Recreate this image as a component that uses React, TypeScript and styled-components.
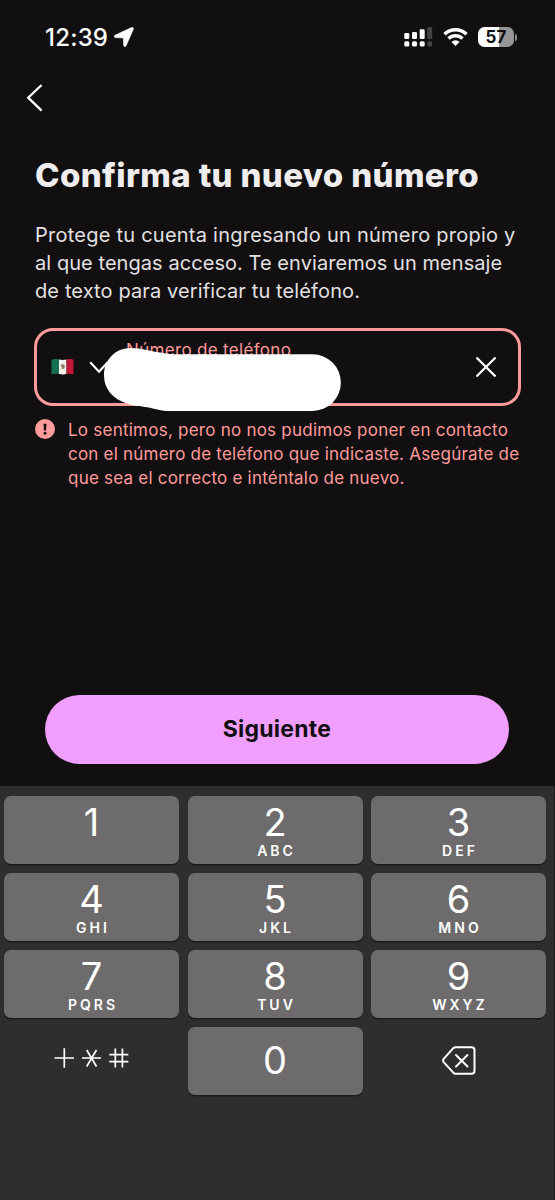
import React from "react";
import styled, { createGlobalStyle } from "styled-components";

interface IKey { digit: string, letters?: string }

const keys: IKey[] = [
  { digit: '1', letters: '' },
  { digit: '2', letters: 'ABC' },
  { digit: '3', letters: 'DEF' },
  { digit: '4', letters: 'GHI' },
  { digit: '5', letters: 'JKL' },
  { digit: '6', letters: 'MNO' },
  { digit: '7', letters: 'PQRS' },
  { digit: '8', letters: 'TUV' },
  { digit: '9', letters: 'WXYZ' },
]

const StatusBar = () => (
  <Status>
    <Clock>
      <Time>12:39</Time>
      <svg width="20" height="20" viewBox="0 0 20 20" fill="#fff">
        <path d="M17.600.5 1 8.200c-1.200.6-1 2.300.4 2.400l7.400.3c.4 0 .6.200.6.600l.3 6.900c.1 1.500 1.800 1.700 2.400.4L19.400 2.100c.4-1-.6-2-1.800-1.600z" stroke="#fff" strokeWidth=".6" strokeLinejoin="round" />
      </svg>
    </Clock>
    <Signals>
      <svg width="29" height="20" viewBox="0 0 29 20" fill="#fff">
        <rect x="0.3" y="6" width="5" height="6" rx="1.3" />
        <rect x="8" y="5" width="5" height="7" rx="1.3" />
        <rect x="15.7" y="2.2" width="5" height="9.8" rx="1.3" />
        <rect x="23.2" y="0" width="5" height="12" rx="1.5" fill="#444344" />
        <rect x="0.3" y="14.2" width="5" height="5.2" rx="1.5" />
        <rect x="8" y="14.2" width="5" height="5.2" rx="1.5" />
        <rect x="15.7" y="14.2" width="5" height="5.2" rx="1.5" />
        <rect x="23.2" y="14.2" width="5" height="5.2" rx="1.5" fill="#444344" />
      </svg>
      <svg width="25" height="18" viewBox="0 0 25 18" fill="none" stroke="#fff" strokeWidth="3.500">
        <path d="M1.500 6.300a15.800 15.800 0 0 1 22 0" />
        <path d="M5.500 10.600a10 10 0 0 1 14 0" />
        <path d="M12.500 18 8.500 14a5.600 5.600 0 0 1 8 0z" fill="#fff" stroke="none" />
      </svg>
      <BatteryWrap>
        <Battery>57</Battery>
        <BatteryTip />
      </BatteryWrap>
    </Signals>
  </Status>
)

const Flag = () => (
  <svg width="23" height="18" viewBox="0 0 23 18">
    <path d="M.5 2C3 .8 5.300 1 8 1.500V16C5.300 15.500 3 15.500.5 16.600z" fill="#157052" />
    <path d="M8 1.500c2.500.6 5 .5 7.500 0V16c-2.500.5-5 .5-7.500 0z" fill="#f2f0ef" />
    <path d="M15.500 1.500c2.500-.6 5-.6 7 .3V16.400c-2-.9-4.500-.9-7-.4z" fill="#c31738" />
    <path d="M10 7.600c.8-1.600 3-1.500 3.300.4.2 1.600-1.300 2.800-2.600 2.200" fill="none" stroke="#8c8a5c" strokeWidth="1.200" />
    <circle cx="11.700" cy="8.500" r="1.300" fill="#78603f" />
  </svg>
)

const Symbols = () => (
  <svg width="76" height="22" viewBox="0 0 76 22" fill="none" stroke="#fff" strokeWidth="1.700">
    <path d="M.5 11h19.500M10.300 1.300v19.500" />
    <path d="M28 11h19M32.700 3l9.800 16.500M42.500 3l-9.800 16.500" />
    <path d="M55.300 7.600h19M55.300 14.700h19M61.300 1.600v19M68.400 1.600v19" />
  </svg>
)

const Backspace = () => (
  <svg width="34" height="29" viewBox="0 0 34 29" fill="none" stroke="#fff" strokeWidth="2" strokeLinecap="round" strokeLinejoin="round">
    <path d="M13.500 1.200h16a3 3 0 0 1 3 3v20.500a3 3 0 0 1-3 3h-16c-1 0-1.600-.4-2.200-1L1.900 16.300c-1-1.100-1-2.600 0-3.700L11.300 2.200c.6-.6 1.200-1 2.200-1z" />
    <path d="m14 9 11.500 11.500M25.500 9 14 20.500" />
  </svg>
)

const App = () => (
  <Screen>
    <GlobalStyle />
    <StatusBar />
    <NavBar>
      <svg width="17" height="28" viewBox="0 0 17 28" fill="none" stroke="#fff" strokeWidth="2.300">
        <path d="M15.600 1 2.200 13.700l13.400 12.900" />
      </svg>
    </NavBar>
    <Content>
      <Title>Confirma tu nuevo número</Title>
      <Description>
        <Line $space={0.24}>Protege tu cuenta ingresando un número propio y</Line>
        <Line $space={0.06}>al que tengas acceso. Te enviaremos un mensaje</Line>
        <Line $space={0.12}>de texto para verificar tu teléfono.</Line>
      </Description>
      <Field>
        <Flag />
        <Chevron width="20" height="13" viewBox="0 0 20 13" fill="none" stroke="#fff" strokeWidth="2.200">
          <path d="m1.200 1.200 8.800 9.500 8.800-9.500" />
        </Chevron>
        <Label>Número de teléfono</Label>
        <Clear width="20" height="20" viewBox="0 0 20 20" fill="none" stroke="#fff" strokeWidth="2.300" strokeLinecap="round">
          <path d="m1.200 1.200 17.600 17.600M18.800 1.200 1.200 18.800" />
        </Clear>
        <Redaction width="239" height="66" viewBox="0 0 239 66" fill="#fff">
          <path d="M28 1C38 1 47 4 57 5.500C63 6.500 67 7.300 75 7.300H209.500a28.200 28.200 0 0 1 0 56.700H67C58 64 52 61.500 44 60.200C37 59.200 33 59.500 24 56.500C10 52 1 42 1 28.500C1 13 12 1 28 1z" />
        </Redaction>
      </Field>
      <ErrorRow>
        <ErrorMark width="20" height="20" viewBox="0 0 20 20">
          <circle cx="10" cy="10" r="10" fill="#ff9b9a" />
          <path d="M8.500 4.800h3l-.5 6.800H9z" fill="#110f10" />
          <circle cx="10" cy="14.200" r="1.500" fill="#110f10" />
        </ErrorMark>
        <ErrorText>
          <Line $space={0.24}>Lo sentimos, pero no nos pudimos poner en contacto</Line>
          <Line $space={0.22}>con el número de teléfono que indicaste. Asegúrate de</Line>
          <Line $space={0.22}>que sea el correcto e inténtalo de nuevo.</Line>
        </ErrorText>
      </ErrorRow>
    </Content>
    <Next>Siguiente</Next>
    <Keypad>
      {keys.map(({ digit, letters }) => (
        <Key key={digit}>
          <Digit>{digit}</Digit>
          <Letters>{letters}</Letters>
        </Key>
      ))}
      <BlankKey><Symbols /></BlankKey>
      <Key $center><Digit>0</Digit></Key>
      <BlankKey $low><Backspace /></BlankKey>
    </Keypad>
  </Screen>
)

export default App

const GlobalStyle = createGlobalStyle`
  * {
    box-sizing: border-box;
  }
  body {
    margin: 0;
    background: #110f10;
    font-family: Inter, "Liberation Sans", sans-serif;
  }
`

const Screen = styled.div`
  width: 555px;
  height: 1200px;
  display: flex;
  flex-direction: column;
  background: #110f10;
  overflow: hidden;
`

const Status = styled.div`
  height: 74px;
  flex: none;
  padding: 0 38px 0 45px;
  display: flex;
  align-items: center;
  justify-content: space-between;
`

const Clock = styled.div`
  display: flex;
  align-items: center;
  gap: 6px;
`

const Time = styled.span`
  padding-top: 1px;
  font-size: 24px;
  font-weight: 500;
  line-height: 28px;
  letter-spacing: 0.200px;
  color: #fff;
`

const Signals = styled.div`
  display: flex;
  align-items: center;
  gap: 10px;
`

const BatteryWrap = styled.div`
  display: flex;
  align-items: center;
  gap: 1px;
`

const Battery = styled.div`
  width: 36px;
  height: 20px;
  border-radius: 6.500px;
  background: linear-gradient(90deg, #fff 57%, #979697 57%);
  color: #110f10;
  font-size: 17px;
  font-weight: 700;
  line-height: 20px;
  text-align: center;
`

const BatteryTip = styled.div`
  width: 2px;
  height: 7px;
  border-radius: 0 2px 2px 0;
  background: #8a898a;
`

const NavBar = styled.div`
  height: 48px;
  flex: none;
  display: flex;
  align-items: center;
  padding-left: 26px;
`

const Content = styled.div`
  flex: none;
  height: 573px;
  padding: 32px 34px 0 35px;
`

const Title = styled.h1`
  margin: 0;
  color: #f0edee;
  font-size: 33px;
  font-weight: 800;
  line-height: 42px;
  letter-spacing: 0.360px;
  white-space: nowrap;
`

const Description = styled.div`
  margin-top: 25px;
  color: #e3e0e1;
  font-size: 20px;
  line-height: 28px;
`

const Line = styled.span<{ $space: number }>`
  display: block;
  white-space: nowrap;
  letter-spacing: ${({ $space }) => $space}px;
`

const Field = styled.div`
  position: relative;
  display: flex;
  width: 487px;
  height: 78px;
  margin-top: 23px;
  margin-left: -1px;
  border: 3px solid #ff9b9a;
  border-radius: 19px;
  padding-left: 14px;

  > svg:first-child {
    margin-top: 27px;
  }
`

const Chevron = styled.svg`
  margin: 30px 0 0 15px;
`

const Label = styled.span`
  margin: 9px 0 0 17px;
  color: #ff9b9a;
  font-size: 17px;
  line-height: 20px;
  letter-spacing: 0.320px;
  white-space: nowrap;
`

const Clear = styled.svg`
  margin: 26px 22px 0 auto;
`

// Covers the number that was typed
const Redaction = styled.svg`
  position: absolute;
  left: 66px;
  top: 16px;
`

const ErrorRow = styled.div`
  display: flex;
  margin-top: 12px;
  gap: 13px;
`

const ErrorMark = styled.svg`
  flex: none;
  margin-top: 1px;
`

const ErrorText = styled.div`
  padding-top: 1px;
  color: #ff9b9a;
  font-size: 17px;
  line-height: 23.800px;
`

const Next = styled.button`
  flex: none;
  width: 464px;
  height: 69px;
  margin: 0 0 22px 45px;
  padding: 0 0 2px;
  border: 0;
  border-radius: 35px;
  background: #f09fff;
  color: #110f10;
  font-family: inherit;
  font-size: 23px;
  font-weight: 700;
  letter-spacing: 0.250px;
`

const Keypad = styled.div`
  flex: 1;
  display: grid;
  grid-template-columns: repeat(3, 175px);
  grid-auto-rows: 68px;
  align-content: start;
  gap: 8.900px 8.500px;
  padding: 10px 0 0 4px;
  background: #2f2d2e;
  border-right: 1px solid #1d1b1c;
`

const Key = styled.div<{ $center?: boolean }>`
  display: flex;
  flex-direction: column;
  align-items: center;
  padding-top: ${({ $center }) => $center ? 13 : 6}px;
  border-radius: 7px;
  background: #6d6b6c;
  box-shadow: 0 1.500px 0 #1c1a1b;
  color: #fff;
`

const BlankKey = styled.div<{ $low?: boolean }>`
  display: flex;
  align-items: center;
  justify-content: center;
  padding-bottom: ${({ $low }) => $low ? 0 : 5}px;
`

const Digit = styled.span`
  font-size: 38px;
  font-weight: 400;
  line-height: 40px;
`

const Letters = styled.span`
  margin-top: 1px;
  padding-left: 3px;
  font-size: 14px;
  font-weight: 600;
  line-height: 16px;
  letter-spacing: 3px;
`
